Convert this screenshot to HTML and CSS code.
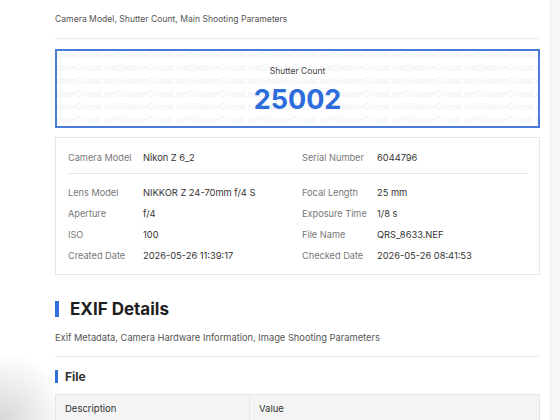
FILE: index.html
```html
<!DOCTYPE html>
<html lang="en">
<head>
    <meta charset="UTF-8">
    <title>Shutter Count Result</title>
    <link rel="stylesheet" href="styles.css">
</head>
<body>
    <div class="page">
        <main class="content">
            <p class="section-desc first">Camera Model, Shutter Count, Main Shooting Parameters</p>

            <div class="count-box">
                <div class="watermark" id="watermark"></div>
                <div class="count-label">Shutter Count</div>
                <div class="count-value">25002</div>
            </div>

            <div class="info-card">
                <div class="info-grid head">
                    <div class="info-row"><span class="info-label">Camera Model</span><span class="info-value">Nikon Z 6_2</span></div>
                    <div class="info-row"><span class="info-label">Serial Number</span><span class="info-value">6044796</span></div>
                </div>
                <div class="info-grid">
                    <div class="info-row"><span class="info-label">Lens Model</span><span class="info-value">NIKKOR Z 24-70mm f/4 S</span></div>
                    <div class="info-row"><span class="info-label">Focal Length</span><span class="info-value">25 mm</span></div>
                    <div class="info-row"><span class="info-label">Aperture</span><span class="info-value">f/4</span></div>
                    <div class="info-row"><span class="info-label">Exposure Time</span><span class="info-value">1/8 s</span></div>
                    <div class="info-row"><span class="info-label">ISO</span><span class="info-value">100</span></div>
                    <div class="info-row"><span class="info-label">File Name</span><span class="info-value">QRS_8633.NEF</span></div>
                    <div class="info-row"><span class="info-label">Created Date</span><span class="info-value">2026-05-26 11:39:17</span></div>
                    <div class="info-row"><span class="info-label">Checked Date</span><span class="info-value">2026-05-26 08:41:53</span></div>
                </div>
            </div>

            <h2 class="section-title">EXIF Details</h2>
            <p class="section-desc">Exif Metadata, Camera Hardware Information, Image Shooting Parameters</p>

            <h3 class="group-title">File</h3>
            <table class="exif-table">
                <thead>
                    <tr><th>Description</th><th>Value</th></tr>
                </thead>
            </table>
        </main>
        <aside class="side-strip"></aside>
    </div>

    <script>
        // fill the count box background with the site name
        const mark = document.getElementById('watermark');
        for (let i = 0; i < 8; i++) {
            const row = document.createElement('div');
            row.className = 'watermark-row';
            for (let j = 0; j < 8; j++) {
                const word = document.createElement('span');
                word.textContent = 'ShutterCount.net';
                row.appendChild(word);
            }
            mark.appendChild(row);
        }
    </script>
</body>
</html>
```

FILE: styles.css
```css
html {
    background: #fff radial-gradient(circle at 0 100%, rgba(0,0,0,0.16), rgba(0,0,0,0) 70px) no-repeat;
    min-height: 100%;
}
body {
    margin: 0;
    font-family: Inter, "Noto Sans", sans-serif;
    color: #333;
}
.page {
    display: flex;
    min-height: 420px;
}
.content {
    flex: 1;
    padding: 11px 10px 0 55px;
}
.side-strip {
    width: 9px;
    background: #f6f6f6;
    border-left: 1px solid #ececec;
}
.section-desc {
    margin: 0;
    padding-bottom: 11px;
    border-bottom: 1px solid #ececec;
    font-size: 9.3px;
    line-height: 16px;
    color: #555;
}
.section-desc.first {
    margin-bottom: 10px;
    font-size: 8.6px;
}
.count-box {
    position: relative;
    overflow: hidden;
    height: 75px;
    border: 2px solid #4a7cd6;
    display: flex;
    flex-direction: column;
    align-items: center;
    background: #fff;
}
.watermark {
    position: absolute;
    top: -2px;
    left: -12px;
    font-size: 8.8px;
    font-weight: 700;
    line-height: 11px;
    letter-spacing: -0.15px;
    color: rgba(60,70,90,0.085);
    white-space: nowrap;
}
.watermark-row span {
    display: inline-block;
    width: 72px;
    overflow: hidden;
}
.count-label {
    position: relative;
    margin-top: 15px;
    font-size: 8.5px;
    color: #444;
}
.count-value {
    position: relative;
    margin-top: 7px;
    font-size: 27px;
    font-weight: 700;
    line-height: 34px;
    color: #2c6cdb;
}
.info-card {
    margin-top: 9px;
    border: 1px solid #e6e6e6;
    padding: 9px 11px 8px 12px;
}
.info-grid {
    display: grid;
    grid-template-columns: 1fr 1fr;
    column-gap: 8px;
}
.info-grid.head {
    padding-bottom: 5px;
    margin-bottom: 8px;
    border-bottom: 1px solid #e6e6e6;
}
.info-row {
    display: flex;
    height: 21px;
    align-items: center;
    font-size: 9.3px;
}
.info-label {
    width: 75px;
    flex-shrink: 0;
    font-size: 9.2px;
    color: #777;
}
.info-value {
    color: #333;
}
.section-title {
    margin: 26px 0 0;
    padding-left: 11px;
    border-left: 4px solid #2f6fe0;
    font-size: 17px;
    line-height: 16px;
    font-weight: 700;
    color: #1e1e1e;
}
.section-title + .section-desc {
    margin-top: 13px;
    padding-bottom: 10px;
}
.group-title {
    margin: 13px 0 0;
    padding-left: 7px;
    border-left: 3px solid #2f6fe0;
    font-size: 12px;
    line-height: 13px;
    font-weight: 700;
    color: #333;
}
.exif-table {
    margin-top: 11px;
    width: 100%;
    border-collapse: collapse;
}
.exif-table th {
    text-align: left;
    font-weight: 400;
    font-size: 9.5px;
    color: #333;
    background: #f4f4f4;
    border: 1px solid #e6e6e6;
    padding: 7px 9px;
    height: 12px;
}
.exif-table th:first-child {
    width: 175px;
}
```
